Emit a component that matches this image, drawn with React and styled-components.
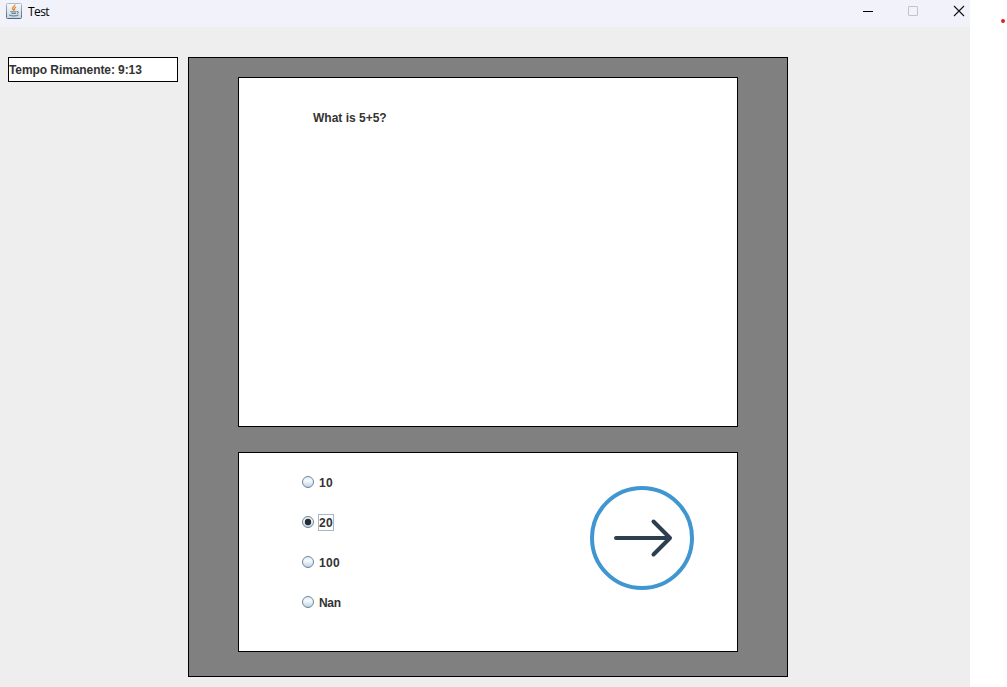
import React from 'react';
import styled, { createGlobalStyle } from 'styled-components';

const GlobalStyle = createGlobalStyle`
  * { box-sizing: border-box; }
  html, body { margin: 0; background: #fff; overflow: hidden; }
`;

const Screen = styled.div`
  display: flex;
  width: 1007px;
  height: 687px;
  background: #fff;
  font: bold 12px/16px 'Liberation Sans', Arial, sans-serif;
  color: #333;
`;

const Window = styled.main`
  display: flex;
  flex-direction: column;
  width: 970px;
  background: #eee;
`;

const TitleBar = styled.header`
  display: flex;
  align-items: center;
  height: 27px;
  padding: 0 5px 5px 6px;
  background: #f1f2fa;
`;

const Title = styled.span`
  flex: 1;
  margin: 2px 0 0 6px;
  font: 12px/16px 'Open Sans', 'Noto Sans', sans-serif;
  letter-spacing: -0.6px;
  color: #000;
`;

const Controls = styled.div`
  display: flex;
  gap: 34px;
  svg { display: block; }
`;

const Body = styled.div`
  display: flex;
  align-items: flex-start;
  gap: 10px;
  padding: 30px 8px 0;
`;

const Timer = styled.div`
  width: 170px;
  height: 25px;
  border: 1px solid #000;
  background: #fff;
  line-height: 25px;
  letter-spacing: -0.08px;
  white-space: nowrap;
`;

const Quiz = styled.section`
  display: flex;
  flex-direction: column;
  gap: 25px;
  width: 600px;
  height: 620px;
  padding: 19px 49px;
  border: 1px solid #000;
  background: #808080;
`;

const Question = styled.div`
  height: 350px;
  padding: 32px 74px;
  border: 1px solid #000;
  background: #fff;
`;

const Answers = styled.div`
  display: flex;
  justify-content: space-between;
  height: 200px;
  padding: 21px 43px 0 63px;
  border: 1px solid #000;
  background: #fff;
`;

const Options = styled.div`
  display: flex;
  flex-direction: column;
  gap: 24px;
`;

const Option = styled.label`
  display: flex;
  align-items: center;
  gap: 4px;
  height: 16px;
`;

const OptionText = styled.span`
  height: 17px;
  padding: 0 1px;
  line-height: 18px;
  letter-spacing: ${(p) => (p.$numeric ? '0.3px' : '-0.3px')};
  outline: ${(p) => (p.$focused ? '1px solid #a3b8cc' : 'none')};
  outline-offset: -1px;
`;

const NextButton = styled.button`
  width: 104px;
  height: 104px;
  margin-top: 12px;
  padding: 0;
  border: 0;
  background: none;
  svg { display: block; }
`;

const Marker = styled.span`
  width: 4px;
  height: 4px;
  margin: 19px 0 0 31px;
  border-radius: 50%;
  background: #e02028;
`;

function JavaIcon() {
  return (
    <svg width="16" height="16" viewBox="0 0 16 16" fill="none">
      <defs>
        <linearGradient id="tile" x1="0" y1="0" x2="0" y2="1">
          <stop offset="0" stopColor="#f8fafb" />
          <stop offset="1" stopColor="#cbd6de" />
        </linearGradient>
        <linearGradient id="edge" x1="0" y1="0" x2="0" y2="1">
          <stop offset="0" stopColor="#a9bac8" />
          <stop offset="1" stopColor="#4a6b87" />
        </linearGradient>
      </defs>
      <rect x=".5" y=".5" width="15" height="15" rx="1" fill="url(#tile)" stroke="url(#edge)" />
      <path d="M8.8 1.5c.5 1.8-2.3 2.2-2.3 3.9 0 1 1 1.3 1.2 2.4M10 4C8.6 4.8 7.8 5.4 8.6 7.2" stroke="#e48a35" strokeWidth="1.3" />
      <path d="M4.5 8.5c1.7.6 4.5.6 6 0M5.3 10.2c1.2.5 3.5.5 4.7 0M3.2 12c2 1.3 7 1.3 9.3 0M11 8.7c2-.5 2 1.3-.2 1.8" stroke="#55778f" strokeWidth="1" />
    </svg>
  );
}

function Radio({ checked }) {
  return (
    <svg width="12" height="12" viewBox="0 0 12 12">
      <defs>
        <linearGradient id="bulb" x1="0" y1="0" x2="0" y2="1">
          <stop offset="0" stopColor="#dce8f2" />
          <stop offset=".4" stopColor="#f6fafd" />
          <stop offset="1" stopColor="#b8cfe5" />
        </linearGradient>
      </defs>
      <circle cx="6" cy="6" r="5.5" fill="url(#bulb)" stroke="#70859a" />
      {checked && <circle cx="6" cy="6" r="3.2" fill="#262b30" />}
    </svg>
  );
}

const options = ['10', '20', '100', 'Nan'];

export default function App() {
  return (
    <Screen>
      <GlobalStyle />
      <Window>
        <TitleBar>
          <JavaIcon />
          <Title>Test</Title>
          <Controls>
            <svg width="12" height="12"><path d="M2 6.5h10" stroke="#000" /></svg>
            <svg width="12" height="12"><rect x="1.5" y="1.5" width="9" height="9" rx=".5" fill="none" stroke="#c2c3c9" /></svg>
            <svg width="12" height="12"><path d="M1 1l10 10M11 1L1 11" stroke="#111" strokeWidth="1.1" /></svg>
          </Controls>
        </TitleBar>
        <Body>
          <Timer>Tempo Rimanente: 9:13</Timer>
          <Quiz>
            <Question>What is 5+5?</Question>
            <Answers>
              <Options>
                {options.map((text) => (
                  <Option key={text}>
                    <Radio checked={text === '20'} />
                    <OptionText $numeric={text !== 'Nan'} $focused={text === '20'}>{text}</OptionText>
                  </Option>
                ))}
              </Options>
              <NextButton aria-label="Next">
                <svg width="104" height="104" fill="none">
                  <circle cx="52" cy="52" r="50" stroke="#4096d0" strokeWidth="4" />
                  <path d="M26 52h54M63.5 35.5L80 52 63.5 68.5" stroke="#2c3e50" strokeWidth="4" strokeLinecap="round" strokeLinejoin="round" />
                </svg>
              </NextButton>
            </Answers>
          </Quiz>
        </Body>
      </Window>
      <Marker />
    </Screen>
  );
}
